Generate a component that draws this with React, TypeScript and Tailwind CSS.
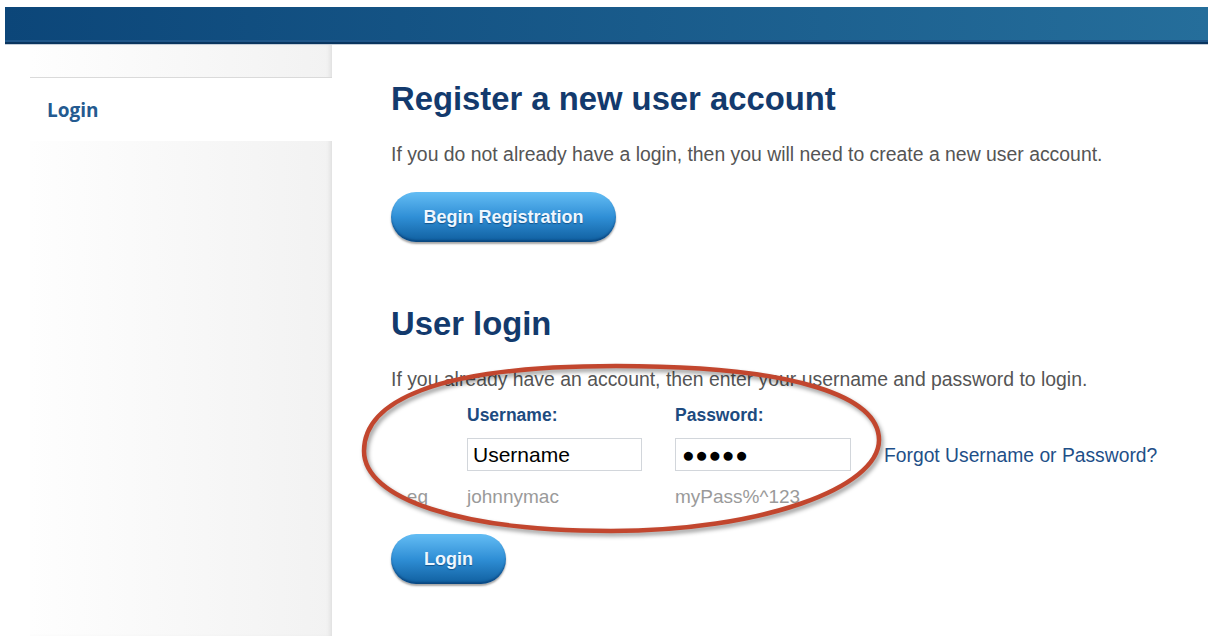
import React from 'react';

const PillButton: React.FC<{ label: string; width: string }> = ({ label, width }) => (
  <button
    type="button"
    className={`${width} h-[50px] rounded-full bg-gradient-to-b from-[#63bdf4] via-[#2f8fd6] to-[#0f5f9f] text-[18px] font-bold text-[#eef7ff] [text-shadow:0_1px_1px_rgba(0,40,80,0.5)] shadow-[0_2px_2px_rgba(0,0,0,0.35),inset_0_-2px_2px_rgba(0,40,90,0.45)] font-['Liberation_Sans',Arial,sans-serif]`}
  >
    {label}
  </button>
);

const Sidebar: React.FC = () => (
  <aside className="w-[302px] shrink-0 bg-gradient-to-r from-[#fefefe] to-[#f2f2f2] shadow-[inset_-4px_0_4px_-2px_rgba(0,0,0,0.08)]">
    <div className="h-[33px] border-b border-[#dadada]" />
    <div className="h-[63px] bg-white flex items-center pl-[17px] pt-[2px]">
      <span className="font-['Open_Sans',sans-serif] font-bold text-[19px] text-[#245a90]">Login</span>
    </div>
  </aside>
);

// hand-drawn red ring around the login fields
const Ring: React.FC = () => (
  <svg
    className="absolute left-[-30px] top-[318px] pointer-events-none drop-shadow-[2px_3px_2px_rgba(0,0,0,0.4)]"
    width="540"
    height="180"
    viewBox="0 0 540 180"
  >
    <path
      d="M3 88 C3 40 70 3 255 3 C440 3 518 35 518 77 C518 125 400 168 250 168 C100 168 3 136 3 88 Z"
      fill="none"
      stroke="#c2462e"
      strokeWidth="4.5"
    />
  </svg>
);

const LoginForm: React.FC = () => (
  <div className="grid grid-cols-[76px_208px_209px_auto] mt-[13px]">
    <div />
    <div className="text-[17.5px] leading-[22px] font-bold text-[#1d4b80]">Username:</div>
    <div className="text-[17.5px] leading-[22px] font-bold text-[#1d4b80]">Password:</div>
    <div />

    <div className="mt-[12px]" />
    <div className="mt-[12px]">
      <input
        defaultValue="Username"
        className="w-[175px] h-[33px] border border-[#d2d6db] px-[5px] text-[21px] text-black outline-none font-['Liberation_Sans',Arial,sans-serif]"
      />
    </div>
    <div className="mt-[12px]">
      <div className="w-[176px] h-[33px] border border-[#d2d6db] pl-[6px] flex items-center text-[21px] tracking-[0.6px] text-black">
        ●●●●●
      </div>
    </div>
    <div className="mt-[12px] pt-[4px] flex items-center">
      <a href="#" className="text-[19.3px] text-[#1e4f88]">Forgot Username or Password?</a>
    </div>

    <div className="mt-[14px] text-right pr-[39px] text-[19px] leading-[24px] text-[#9a9a9a]">eg</div>
    <div className="mt-[14px] text-[19px] leading-[24px] text-[#9a9a9a]">johnnymac</div>
    <div className="mt-[14px] text-[19px] leading-[24px] text-[#9a9a9a]">myPass%^123</div>
    <div />
  </div>
);

export default function App() {
  return (
    <div className="w-[1208px] h-[636px] overflow-hidden bg-white font-['Liberation_Sans',Arial,sans-serif] pt-[7px] flex flex-col">
      <header className="ml-[5px] h-[38px] shrink-0 bg-gradient-to-r from-[#0c4679] to-[#256e9b] flex flex-col justify-end">
        <div className="h-[2px] bg-[#1f5689]" />
        <div className="h-[2px] bg-[#0a355f]" />
        <div className="h-px bg-[#c5ced8]" />
      </header>

      <div className="flex flex-1 pl-[30px]">
        <Sidebar />

        <main className="relative ml-[59px] pt-[36px]">
          <h1 className="text-[32.8px] leading-[36px] font-bold text-[#133a6d]">Register a new user account</h1>
          <p className="mt-[25px] text-[19.4px] leading-[24px] text-[#555]">
            If you do not already have a login, then you will need to create a new user account.
          </p>
          <div className="mt-[26px]">
            <PillButton label="Begin Registration" width="w-[225px]" />
          </div>

          <h2 className="mt-[64px] text-[32.8px] leading-[36px] font-bold text-[#133a6d]">User login</h2>
          <p className="mt-[25px] text-[19.4px] leading-[24px] text-[#555]">
            If you already have an account, then enter your username and password to login.
          </p>

          <LoginForm />

          <div className="mt-[25px]">
            <PillButton label="Login" width="w-[115px]" />
          </div>

          <Ring />
        </main>
      </div>
    </div>
  );
}
